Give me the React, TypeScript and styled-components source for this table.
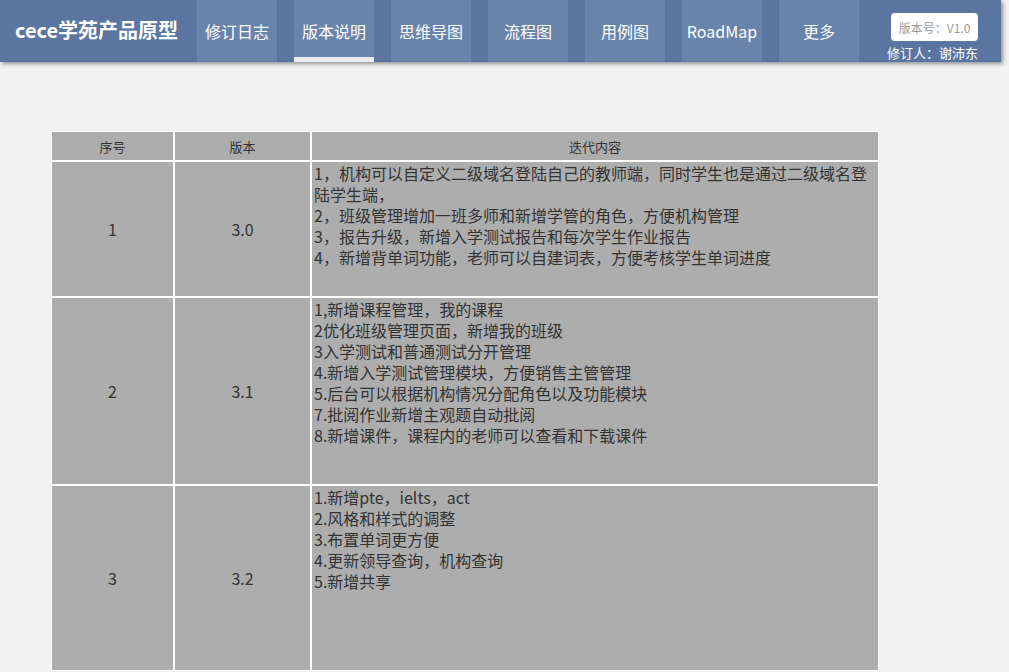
import React from "react";
import styled, { createGlobalStyle } from "styled-components";

const GlobalStyle = createGlobalStyle`
  html, body {
    margin: 0;
    padding: 0;
    background: #f2f2f2;
    font-family: "Noto Sans CJK SC", "Noto Sans", "Liberation Sans", sans-serif;
    color: #333333;
    overflow: hidden;
  }
`;

const Page = styled.div`
  width: 1009px;
  height: 672px;
  background: #f2f2f2;
  position: relative;
`;

const Header = styled.header`
  width: 1001px;
  height: 62px;
  background: #5a76a0;
  box-shadow: 2px 2px 4px rgba(0, 0, 0, 0.4);
  display: flex;
  align-items: stretch;
  position: relative;
  z-index: 1;
`;

const Title = styled.div`
  width: 197px;
  flex: none;
  padding-left: 15px;
  box-sizing: border-box;
  display: flex;
  align-items: center;
  padding-bottom: 4px;
  color: #ffffff;
  font-size: 20px;
  font-weight: 700;
  white-space: nowrap;
`;

const Tabs = styled.nav`
  display: flex;
  gap: 17px;
`;

const Tab = styled.div<{ $active?: boolean }>`
  width: 80px;
  height: 62px;
  box-sizing: border-box;
  background: #6984ab;
  color: #ffffff;
  font-size: 16px;
  display: flex;
  align-items: center;
  justify-content: center;
  border-bottom: 5px solid ${(p) => (p.$active ? "#e9edf3" : "transparent")};
  padding-top: 5px;
  white-space: nowrap;
`;

const Info = styled.div`
  margin-left: 28px;
  display: flex;
  flex-direction: column;
  align-items: flex-end;
  padding-top: 13px;
`;

const VersionBox = styled.div`
  width: 87px;
  height: 28px;
  box-sizing: border-box;
  background: #ffffff;
  border-radius: 4px;
  color: #999999;
  font-size: 12px;
  display: flex;
  align-items: center;
  justify-content: center;
  white-space: nowrap;
`;

const Reviser = styled.div`
  color: #ffffff;
  font-size: 13px;
  line-height: 17px;
  margin-top: 3px;
  white-space: nowrap;
`;

const Main = styled.main`
  padding: 69px 0 0 51px;
`;

const Grid = styled.div`
  display: inline-grid;
  grid-template-columns: 121px 135px 566px;
  grid-template-rows: 28px 134px 186px 184px;
  gap: 2px;
  padding: 1px;
  background: #ffffff;
`;

const HeadCell = styled.div`
  background: #adadad;
  display: flex;
  align-items: center;
  justify-content: center;
  font-size: 13px;
  color: #333333;
`;

const CenterCell = styled.div`
  background: #adadad;
  display: flex;
  align-items: center;
  justify-content: center;
  font-size: 16px;
  color: #333333;
`;

const ContentCell = styled.div`
  background: #adadad;
  padding: 1px 0 0 2px;
  font-size: 16px;
  line-height: 21px;
  color: #333333;
`;

const Line = styled.div`
  white-space: nowrap;
`;

const tabs = ["修订日志", "版本说明", "思维导图", "流程图", "用例图", "RoadMap", "更多"];

const rows = [
  {
    no: "1",
    ver: "3.0",
    lines: [
      "1，机构可以自定义二级域名登陆自己的教师端，同时学生也是通过二级域名登",
      "陆学生端，",
      "2，班级管理增加一班多师和新增学管的角色，方便机构管理",
      "3，报告升级，新增入学测试报告和每次学生作业报告",
      "4，新增背单词功能，老师可以自建词表，方便考核学生单词进度",
    ],
  },
  {
    no: "2",
    ver: "3.1",
    lines: [
      "1,新增课程管理，我的课程",
      "2优化班级管理页面，新增我的班级",
      "3入学测试和普通测试分开管理",
      "4.新增入学测试管理模块，方便销售主管管理",
      "5.后台可以根据机构情况分配角色以及功能模块",
      "7.批阅作业新增主观题自动批阅",
      "8.新增课件，课程内的老师可以查看和下载课件",
    ],
  },
  {
    no: "3",
    ver: "3.2",
    lines: [
      "1.新增pte，ielts，act",
      "2.风格和样式的调整",
      "3.布置单词更方便",
      "4.更新领导查询，机构查询",
      "5.新增共享",
    ],
  },
];

export default function App() {
  return (
    <Page>
      <GlobalStyle />
      <Header>
        <Title>cece学苑产品原型</Title>
        <Tabs>
          {tabs.map((t) => (
            <Tab key={t} $active={t === "版本说明"}>
              {t}
            </Tab>
          ))}
        </Tabs>
        <Info>
          <VersionBox>版本号：V1.0</VersionBox>
          <Reviser>修订人：谢沛东</Reviser>
        </Info>
      </Header>
      <Main>
        <Grid>
          <HeadCell>序号</HeadCell>
          <HeadCell>版本</HeadCell>
          <HeadCell>迭代内容</HeadCell>
          {rows.map((r) => (
            <React.Fragment key={r.no}>
              <CenterCell>{r.no}</CenterCell>
              <CenterCell>{r.ver}</CenterCell>
              <ContentCell>
                {r.lines.map((l, i) => (
                  <Line key={i}>{l}</Line>
                ))}
              </ContentCell>
            </React.Fragment>
          ))}
        </Grid>
      </Main>
    </Page>
  );
}
